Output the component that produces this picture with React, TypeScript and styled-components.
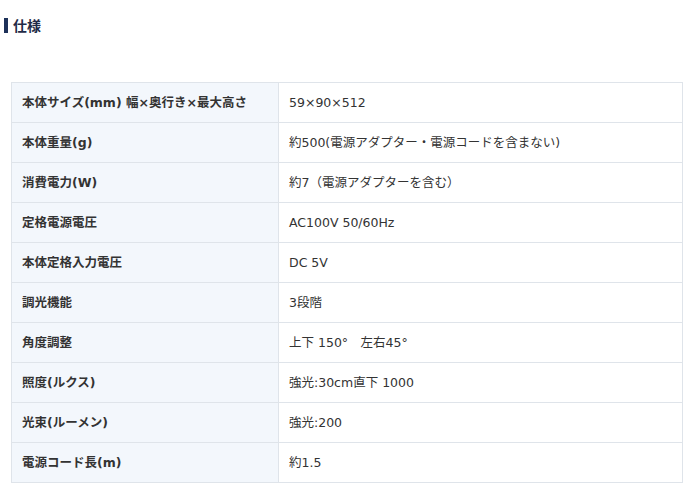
import React from "react";
import styled, { createGlobalStyle } from "styled-components";

const Global = createGlobalStyle`
  html, body { margin: 0; padding: 0; background: #ffffff; }
  body { font-family: "DejaVu Sans", "Noto Sans CJK JP", sans-serif; color: #333; }
`;

const Page = styled.div`
  padding: 17px 11px 0 4px;
  width: 694px;
  box-sizing: border-box;
`;

const Heading = styled.h2`
  margin: 0;
  display: flex;
  align-items: center;
  gap: 5px;
  font-family: "Noto Sans CJK JP", sans-serif;
  font-size: 14px;
  font-weight: 700;
  line-height: 17px;
  color: #1f2b47;
  &::before {
    content: "";
    display: block;
    width: 4px;
    height: 15px;
    background: #1d3159;
  }
`;

const Table = styled.table`
  margin: 48px 0 0 7px;
  width: 672px;
  border-collapse: collapse;
  table-layout: fixed;
  font-size: 12.5px;
`;

const Row = styled.tr`
  height: 40px;
`;

const Label = styled.th`
  width: 246px;
  padding: 1px 10px 0;
  text-align: left;
  font-weight: 700;
  background: #f3f7fc;
  border: 1px solid #dfe4ea;
  color: #333;
  line-height: 18px;
  white-space: nowrap;
`;

const Value = styled.td`
  padding: 1px 10px 0;
  border: 1px solid #dfe4ea;
  color: #333;
  line-height: 18px;
`;

const rows: [string, string][] = [
  ["本体サイズ(mm) 幅×奥行き×最大高さ", "59×90×512"],
  ["本体重量(g)", "約500(電源アダプター・電源コードを含まない)"],
  ["消費電力(W)", "約7（電源アダプターを含む）"],
  ["定格電源電圧", "AC100V 50/60Hz"],
  ["本体定格入力電圧", "DC 5V"],
  ["調光機能", "3段階"],
  ["角度調整", "上下 150°　左右45°"],
  ["照度(ルクス)", "強光:30cm直下 1000"],
  ["光束(ルーメン)", "強光:200"],
  ["電源コード長(m)", "約1.5"],
];

export default function App() {
  return (
    <Page>
      <Global />
      <Heading>仕様</Heading>
      <Table>
        <tbody>
          {rows.map(([k, v]) => (
            <Row key={k}>
              <Label>{k}</Label>
              <Value>{v}</Value>
            </Row>
          ))}
        </tbody>
      </Table>
    </Page>
  );
}
